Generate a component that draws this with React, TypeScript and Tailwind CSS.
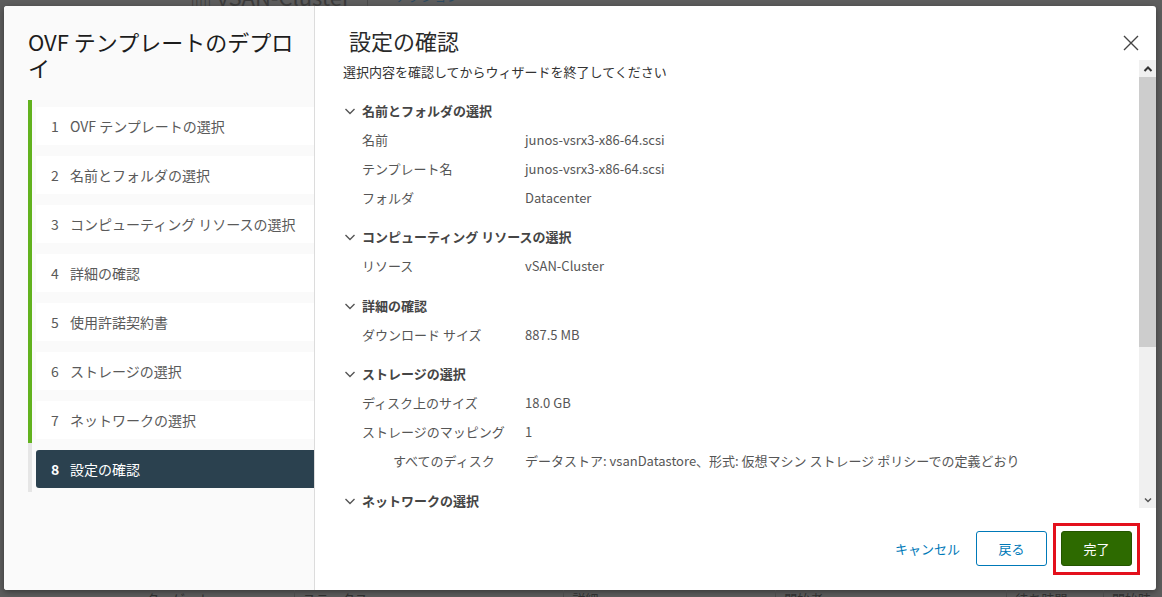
import React from 'react';

const FONT = { fontFamily: '"Noto Sans CJK JP", "Noto Sans", sans-serif' };

const STEPS = [
  'OVF テンプレートの選択',
  '名前とフォルダの選択',
  'コンピューティング リソースの選択',
  '詳細の確認',
  '使用許諾契約書',
  'ストレージの選択',
  'ネットワークの選択',
  '設定の確認',
];

type Row = { label: string; value: string; indent?: boolean };
type Section = { title: string; rows: Row[] };

const SECTIONS: Section[] = [
  {
    title: '名前とフォルダの選択',
    rows: [
      { label: '名前', value: 'junos-vsrx3-x86-64.scsi' },
      { label: 'テンプレート名', value: 'junos-vsrx3-x86-64.scsi' },
      { label: 'フォルダ', value: 'Datacenter' },
    ],
  },
  {
    title: 'コンピューティング リソースの選択',
    rows: [{ label: 'リソース', value: 'vSAN-Cluster' }],
  },
  {
    title: '詳細の確認',
    rows: [{ label: 'ダウンロード サイズ', value: '887.5 MB' }],
  },
  {
    title: 'ストレージの選択',
    rows: [
      { label: 'ディスク上のサイズ', value: '18.0 GB' },
      { label: 'ストレージのマッピング', value: '1' },
      {
        label: 'すべてのディスク',
        value: 'データストア: vsanDatastore、形式: 仮想マシン ストレージ ポリシーでの定義どおり',
        indent: true,
      },
    ],
  },
  { title: 'ネットワークの選択', rows: [] },
];

const Chevron = () => (
  <svg width="12" height="12" viewBox="0 0 12 12" className="shrink-0">
    <polyline points="1.5,4 6,8.5 10.5,4" fill="none" stroke="#565656" strokeWidth="1.4" />
  </svg>
);

const StepList: React.FC = () => (
  <div className="ml-[24px] mt-[20px] flex flex-col">
    {STEPS.map((s, i) => {
      const active = i === STEPS.length - 1;
      return (
        <div key={s} className="flex">
          <div className={`w-[4px] shrink-0 ${active ? 'bg-[#e6e6e6]' : 'bg-[#62b21e]'}`} />
          <div className="flex-1 pl-[4px] pt-[7px] pb-[4px]">
            <div
              className={`flex h-[38px] items-center pl-[15px] text-[14px] ${
                active ? 'bg-[#2b414f] text-white rounded-l-[3px]' : 'bg-white text-[#5a5a5a]'
              }`}
            >
              <span className={`w-[19px] ${active ? 'font-semibold' : ''}`}>{i + 1}</span>
              <span>{s}</span>
            </div>
          </div>
        </div>
      );
    })}
  </div>
);

const Scrollbar: React.FC = () => (
  <div className="flex w-[17px] shrink-0 flex-col bg-[#f0f0f0]">
    <div className="flex h-[17px] items-center justify-center">
      <svg width="10" height="8" viewBox="0 0 10 8">
        <polyline points="1.5,6 5,2.5 8.5,6" fill="none" stroke="#333" strokeWidth="2" />
      </svg>
    </div>
    <div className="h-[270px] bg-[#cdcdcd]" />
    <div className="flex-1" />
    <div className="flex h-[17px] items-center justify-center">
      <svg width="10" height="8" viewBox="0 0 10 8">
        <polyline points="2,2.5 5,5.5 8,2.5" fill="none" stroke="#555" strokeWidth="1.5" />
      </svg>
    </div>
  </div>
);

const Summary: React.FC = () => (
  <div className="flex-1 overflow-hidden pl-[28px] pt-[3px]">
    <div className="h-[18px] text-[13px] leading-[18px] text-[#333]">
      選択内容を確認してからウィザードを終了してください
    </div>
    <div className="mt-[15px] flex flex-col">
      {SECTIONS.map((sec, i) => (
        <div key={sec.title} className={i > 0 ? 'mt-[10.5px]' : ''}>
          <div className="flex h-[29px] items-center text-[13px] font-bold text-[#454545]">
            <span className="ml-[1px] mr-[6px] flex">
              <Chevron />
            </span>
            {sec.title}
          </div>
          {sec.rows.map((r) => (
            <div key={r.label} className="flex h-[29px] items-center text-[13px] text-[#565656]">
              <span className={r.indent ? 'w-[182px] pl-[50px]' : 'w-[182px] pl-[19px]'}>{r.label}</span>
              <span className="whitespace-nowrap">{r.value}</span>
            </div>
          ))}
        </div>
      ))}
    </div>
  </div>
);

export default function App() {
  return (
    <div className="relative h-[597px] w-[1162px] overflow-hidden bg-[#5d5d5d]" style={FONT}>
      {/* dimmed page behind the dialog */}
      <div className="h-[6px] overflow-hidden">
        <div className="-mt-[16px] flex items-center pl-[190px] text-[22px] leading-[24px] text-[#3a3a3a]">
          <span>▥ vSAN-Cluster</span>
          <span className="ml-[16px] h-[24px] w-px bg-[#4a4a4a]" />
          <span className="ml-[28px] text-[13px] text-[#2c4a60]">アクション</span>
        </div>
      </div>

      <div className="ml-[4px] flex h-[584px] w-[1152px] overflow-hidden rounded-[3px] bg-white shadow-[0_2px_6px_rgba(0,0,0,0.4)]">
        {/* left: wizard steps */}
        <div className="w-[311px] shrink-0 border-r border-[#dcdcdc] bg-[#fafafa]">
          <div className="w-[306px] pl-[24px] pt-[22px] text-[22px] leading-[26px] text-[#1c1c1c]">
            OVF テンプレートのデプロイ
          </div>
          <StepList />
        </div>

        {/* right: content */}
        <div className="flex min-w-0 flex-1 flex-col">
          <div className="flex h-[54px] shrink-0 items-start justify-between">
            <div className="pl-[34px] pt-[21px] text-[22px] leading-[26px] text-[#2a2a2a]">設定の確認</div>
            <button className="mr-[17px] mt-[29px]">
              <svg width="16" height="16" viewBox="0 0 16 16">
                <path d="M1 1 L15 15 M15 1 L1 15" stroke="#444" strokeWidth="1.4" fill="none" />
              </svg>
            </button>
          </div>

          <div className="flex h-[448px] shrink-0">
            <Summary />
            <Scrollbar />
          </div>

          <div className="flex flex-1 items-start justify-end pr-[24px] pt-[23px] text-[13px]">
            <button className="mr-[16px] h-[35px] text-[#0079b8]">キャンセル</button>
            <button className="h-[35px] w-[71px] rounded-[3px] border border-[#0079b8] bg-white text-[#0079b8]">
              戻る
            </button>
            <div className="relative ml-[14px]">
              <button className="h-[35px] w-[71px] rounded-[3px] border border-[#245500] bg-[#2d6a00] text-white">
                完了
              </button>
              <span className="pointer-events-none absolute -bottom-[9px] -left-[8px] -right-[8px] -top-[8px] border-[3px] border-[#e3101c]" />
            </div>
          </div>
        </div>
      </div>

      <div className="h-[7px] overflow-hidden">
        <div className="flex items-start pl-[100px] text-[13px] leading-[18px] text-[#2f2f2f]">
          <span className="w-[200px] pl-[36px]">▾ ターゲット</span>
          <span className="w-[280px] border-l border-[#4a4a4a] pl-[8px]">ステータス</span>
          <span className="w-[220px] border-l border-[#4a4a4a] pl-[8px]">詳細</span>
          <span className="w-[240px] border-l border-[#4a4a4a] pl-[8px]">開始者</span>
          <span className="w-[100px] border-l border-[#4a4a4a] pl-[8px]">待ち時間</span>
          <span className="border-l border-[#4a4a4a] pl-[8px]">開始時刻</span>
        </div>
      </div>
    </div>
  );
}
